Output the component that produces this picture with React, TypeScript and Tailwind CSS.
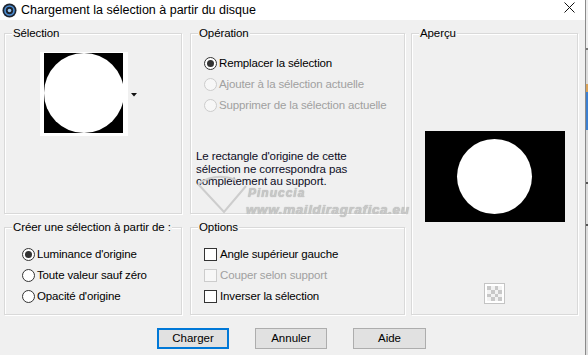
import React from 'react';

const font = { fontFamily: '"Liberation Sans", Arial, sans-serif' };

function Group({ label, className, children }: { label: string; className?: string; children?: React.ReactNode }) {
  return (
    <div className={`relative border border-[#d9d9d9] shadow-[inset_1px_1px_0_#ffffff,1px_1px_0_#ffffff] ${className || ''}`}>
      <span className="absolute left-[7px] top-[-8px] bg-[#f0f0f0] px-[1px] text-[11.5px] leading-[14px] tracking-[-0.1px] text-black whitespace-nowrap">
        {label}
      </span>
      {children}
    </div>
  );
}

function Radio({ label, checked, disabled }: { label: string; checked?: boolean; disabled?: boolean }) {
  return (
    <div className="flex items-center h-[21px]">
      <span
        className={`w-[13px] h-[13px] rounded-full border flex items-center justify-center ${
          disabled ? 'border-[#cccccc] bg-[#f7f7f7]' : 'border-[#333333] bg-white'
        }`}
      >
        {checked && <span className="w-[7px] h-[7px] rounded-full bg-[#333333]" />}
      </span>
      <span className={`ml-[2px] text-[11.5px] tracking-[-0.15px] whitespace-nowrap ${disabled ? 'text-[#a0a0a0]' : 'text-black'}`}>
        {label}
      </span>
    </div>
  );
}

function Check({ label, disabled }: { label: string; disabled?: boolean }) {
  return (
    <div className="flex items-center h-[21px]">
      <span className={`w-[13px] h-[13px] border ${disabled ? 'border-[#cccccc] bg-[#f7f7f7]' : 'border-[#333333] bg-white'}`} />
      <span className={`ml-[3px] text-[11.5px] tracking-[-0.15px] whitespace-nowrap ${disabled ? 'text-[#a0a0a0]' : 'text-black'}`}>
        {label}
      </span>
    </div>
  );
}

export default function App() {
  return (
    <div className="w-[588px] h-[355px] flex bg-[#f0f0f0] overflow-hidden" style={font}>
      {/* Dialog window */}
      <div className="w-[585px] flex flex-col">
        {/* Title bar */}
        <div className="h-[20px] bg-white flex items-center">
          <svg width="15" height="15" viewBox="0 0 15 15" className="ml-[2px]">
            <circle cx="7.5" cy="7.5" r="7" fill="#1f2530" />
            <circle cx="7.5" cy="7.5" r="4.5" fill="none" stroke="#4c8fd6" strokeWidth="1.6" />
            <circle cx="7.5" cy="7.5" r="1.8" fill="#9cc8f0" />
          </svg>
          <span className="ml-[4px] text-[12.5px] leading-[16px] text-black whitespace-nowrap">Chargement la sélection à partir du disque</span>
          <svg width="11" height="11" viewBox="0 0 11 11" className="ml-auto mr-[10px] mb-[6px]">
            <path d="M0.5 0.5 L10.5 10.5 M10.5 0.5 L0.5 10.5" stroke="#111" strokeWidth="1" />
          </svg>
        </div>

        {/* Body */}
        <div className="flex-1 pt-[13px] pl-[4px]">
          <div className="flex">
            <div className="grid grid-cols-[178px_215px] grid-rows-[181px_88px] gap-x-[8px] gap-y-[13px]">
              <Group label="Sélection">
                <div className="ml-[35px] mt-[18px] flex items-center">
                  <div className="w-[88px] h-[84px] bg-white pl-[4px] pt-[1px]">
                    <div className="w-[79px] h-[80px] bg-black flex items-center justify-center overflow-hidden">
                      <div className="w-[80px] h-[80px] rounded-full bg-white shrink-0" />
                    </div>
                  </div>
                  <svg width="6" height="4" viewBox="0 0 6 4" className="ml-[3px] mt-[2px]">
                    <path d="M0 0 H6 L3 3.5 Z" fill="#111" />
                  </svg>
                </div>
              </Group>

              <Group label="Opération">
                <div className="pl-[13px] pt-[19px]">
                  <Radio label="Remplacer la sélection" checked />
                  <Radio label="Ajouter à la sélection actuelle" disabled />
                  <Radio label="Supprimer de la sélection actuelle" disabled />
                  <p className="mt-[34px] ml-[-8px] text-[11.5px] leading-[12.5px] tracking-[-0.1px] text-[#0c0c1e]">
                    Le rectangle d'origine de cette
                    <br />
                    sélection ne correspondra pas
                    <br />
                    complètement au support.
                  </p>
                </div>

                {/* Watermark */}
                <svg width="60" height="46" viewBox="0 0 60 46" className="absolute left-[3px] top-[136px] pointer-events-none">
                  <path d="M4 14 Q22 2 42 10 M4 14 L30 42 L52 16" fill="none" stroke="#cdcdcd" strokeWidth="2" />
                </svg>
                <span className="absolute left-[57px] top-[152px] text-[12px] leading-[14px] font-bold italic tracking-[1px] text-[#c8c8c8] [text-shadow:0_0_1px_#a0a0a0] pointer-events-none">
                  Pinuccia
                </span>
                <span className="absolute left-[55px] top-[168px] text-[13.5px] leading-[16px] font-bold italic tracking-[0.6px] text-[#c8c8c8] [text-shadow:0_0_1px_#a0a0a0] whitespace-nowrap pointer-events-none">
                  www.maildiragrafica.eu
                </span>
              </Group>

              <Group label="Créer une sélection à partir de :">
                <div className="pl-[17px] pt-[16px]">
                  <Radio label="Luminance d'origine" checked />
                  <Radio label="Toute valeur sauf zéro" />
                  <Radio label="Opacité d'origine" />
                </div>
              </Group>

              <Group label="Options">
                <div className="pl-[13px] pt-[16px]">
                  <Check label="Angle supérieur gauche" />
                  <Check label="Couper selon support" disabled />
                  <Check label="Inverser la sélection" />
                </div>
              </Group>
            </div>

            <Group label="Aperçu" className="ml-[6px] w-[167px] h-[282px]">
              <div className="flex flex-col items-center pt-[97px]">
                <div className="w-[140px] h-[91px] bg-black flex items-center justify-center">
                  <div className="w-[75px] h-[75px] rounded-full bg-white" />
                </div>
                <div className="mt-[61px] w-[21px] h-[21px] border border-[#c4c4c4] bg-white p-[2px]">
                  <div className="grid grid-cols-4 grid-rows-4 w-full h-full">
                    {Array.from({ length: 16 }).map((_, i) => (
                      <div key={i} className={(Math.floor(i / 4) + i) % 2 === 0 ? 'bg-[#c8c8c8]' : 'bg-[#f2f2f2]'} />
                    ))}
                  </div>
                </div>
              </div>
            </Group>
          </div>

          {/* Buttons */}
          <div className="flex gap-[26px] pl-[153px] mt-[13px]">
            <button className="w-[72px] h-[21px] bg-[#e1e1e1] border-2 border-[#0078d7] text-[11.5px] text-black">Charger</button>
            <button className="w-[72px] h-[21px] bg-[#e1e1e1] border border-[#adadad] text-[11.5px] text-black">Annuler</button>
            <button className="w-[73px] h-[21px] bg-[#e1e1e1] border border-[#adadad] text-[11.5px] text-black">Aide</button>
          </div>
        </div>
      </div>

      {/* Window edge and background window */}
      <div className="w-[1px] bg-[#8a8a8a]" />
      <div className="w-[2px] flex flex-col bg-[#dcdcdc]">
        <div className="h-[48px] bg-[#eeeeee]" />
        <div className="h-[2px] bg-[#777777]" />
        <div className="h-[34px]" />
        <div className="h-[8px] bg-[#d9a35a]" />
        <div className="h-[38px] bg-[#3d7fd0]" />
        <div className="h-[52px]" />
        <div className="h-[2px] bg-[#555555]" />
        <div className="h-[40px]" />
        <div className="h-[2px] bg-[#555555]" />
      </div>
    </div>
  );
}
